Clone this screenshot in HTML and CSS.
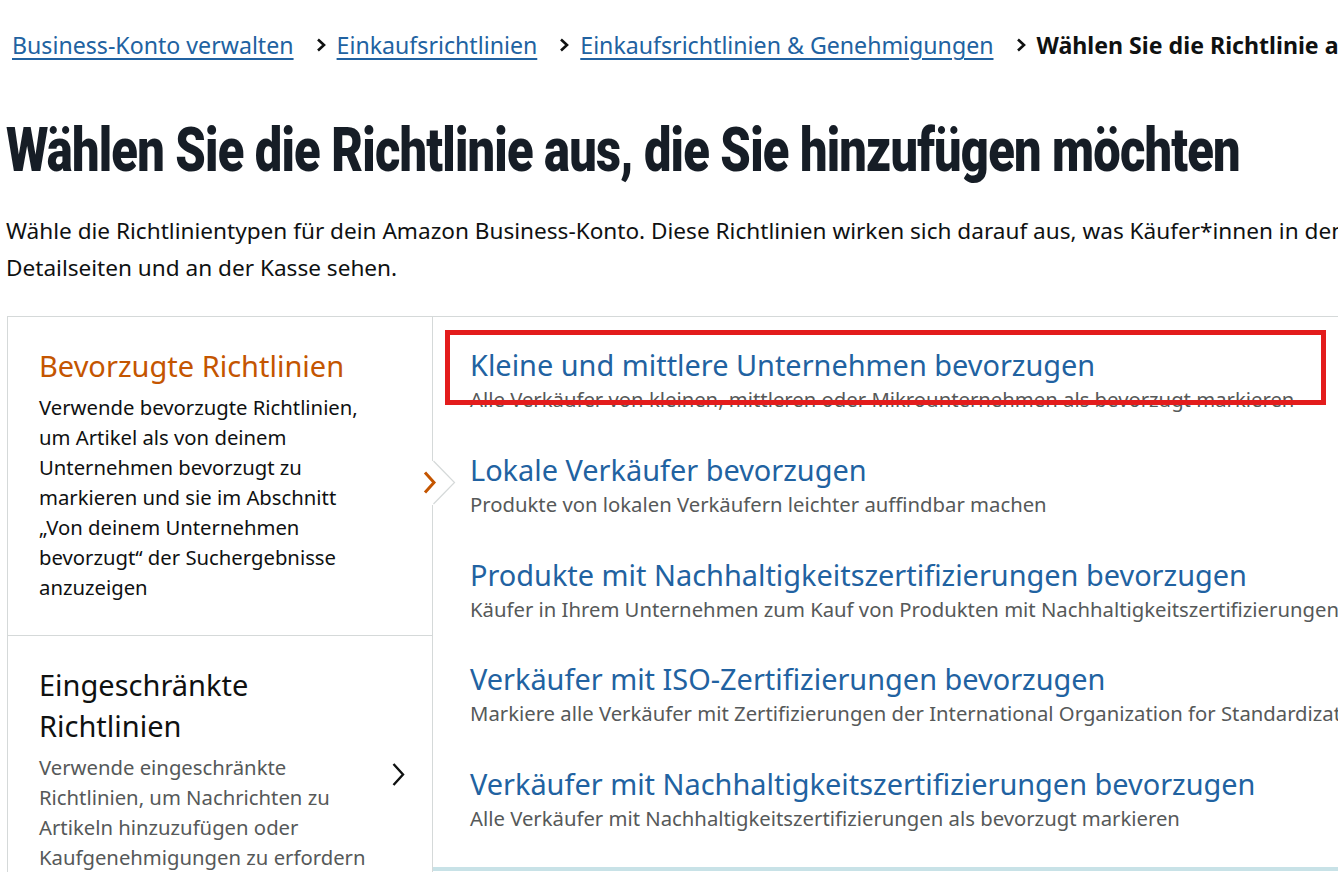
FILE: index.html
```html
<!DOCTYPE html>
<html lang="de">
<head>
<meta charset="utf-8">
<title>Richtlinie auswählen</title>
<link rel="stylesheet" href="styles.css">
</head>
<body>
<div class="page">
  <nav class="breadcrumb">
    <a class="crumb-link" href="#">Business-Konto verwalten</a>
    <svg class="crumb-sep" width="12" height="14" viewBox="0 0 12 14"><polyline points="3,1.5 9,7 3,12.5" fill="none" stroke="#0f1111" stroke-width="2.6"/></svg>
    <a class="crumb-link" href="#">Einkaufsrichtlinien</a>
    <svg class="crumb-sep" width="12" height="14" viewBox="0 0 12 14"><polyline points="3,1.5 9,7 3,12.5" fill="none" stroke="#0f1111" stroke-width="2.6"/></svg>
    <a class="crumb-link" href="#">Einkaufsrichtlinien &amp; Genehmigungen</a>
    <svg class="crumb-sep" width="12" height="14" viewBox="0 0 12 14"><polyline points="3,1.5 9,7 3,12.5" fill="none" stroke="#0f1111" stroke-width="2.6"/></svg>
    <span class="crumb-current">Wählen Sie die Richtlinie aus, die Sie hinzufügen möchten</span>
  </nav>

  <h1 class="title"><span class="title-inner">Wählen Sie die Richtlinie aus, die Sie hinzufügen möchten</span></h1>

  <p class="intro">Wähle die Richtlinientypen für dein Amazon Business-Konto. Diese Richtlinien wirken sich darauf aus, was Käufer*innen in den Suchergebnissen, auf<br>Detailseiten und an der Kasse sehen.</p>

  <div class="card">
    <div class="types">
      <div class="type type-active">
        <div class="type-text">
          <h2 class="type-title">Bevorzugte Richtlinien</h2>
          <p class="type-desc">Verwende bevorzugte Richtlinien,<br>um Artikel als von deinem<br>Unternehmen bevorzugt zu<br>markieren und sie im Abschnitt<br>„Von deinem Unternehmen<br>bevorzugt“ der Suchergebnisse<br>anzuzeigen</p>
        </div>
      </div>
      <div class="type">
        <div class="type-text">
          <h2 class="type-title">Eingeschränkte<br>Richtlinien</h2>
          <p class="type-desc">Verwende eingeschränkte<br>Richtlinien, um Nachrichten zu<br>Artikeln hinzuzufügen oder<br>Kaufgenehmigungen zu erfordern</p>
        </div>
        <svg class="type-chevron" width="16" height="26" viewBox="0 0 16 26"><polyline points="3.5,2 13,12.5 3.5,23" fill="none" stroke="#0f1111" stroke-width="2.4"/></svg>
      </div>
    </div>

    <svg class="notch" width="45" height="46" viewBox="0 0 45 46">
      <rect x="15.5" y="1" width="4" height="44" fill="#ffffff"/>
      <polyline points="17.5,1 38.5,22.5 17.5,44" fill="#ffffff" stroke="#d5d9d9" stroke-width="1.2"/>
      <polyline points="9,12.5 18,22.5 9,32.5" fill="none" stroke="#c45500" stroke-width="3"/>
    </svg>

    <div class="options">
      <div class="option">
        <a class="option-title" href="#">Kleine und mittlere Unternehmen bevorzugen</a>
        <p class="option-desc">Alle Verkäufer von kleinen, mittleren oder Mikrounternehmen als bevorzugt markieren</p>
        <div class="highlight"></div>
      </div>
      <div class="option">
        <a class="option-title" href="#">Lokale Verkäufer bevorzugen</a>
        <p class="option-desc">Produkte von lokalen Verkäufern leichter auffindbar machen</p>
      </div>
      <div class="option">
        <a class="option-title" href="#">Produkte mit Nachhaltigkeitszertifizierungen bevorzugen</a>
        <p class="option-desc">Käufer in Ihrem Unternehmen zum Kauf von Produkten mit Nachhaltigkeitszertifizierungen ermutigen</p>
      </div>
      <div class="option">
        <a class="option-title" href="#">Verkäufer mit ISO-Zertifizierungen bevorzugen</a>
        <p class="option-desc">Markiere alle Verkäufer mit Zertifizierungen der International Organization for Standardization als bevorzugt</p>
      </div>
      <div class="option">
        <a class="option-title" href="#">Verkäufer mit Nachhaltigkeitszertifizierungen bevorzugen</a>
        <p class="option-desc">Alle Verkäufer mit Nachhaltigkeitszertifizierungen als bevorzugt markieren</p>
      </div>
    </div>
  </div>
</div>
</body>
</html>
```

FILE: styles.css
```css
html, body {
  margin: 0;
  padding: 0;
  background: #ffffff;
  overflow: hidden;
}

body {
  font-family: "Noto Sans", "Open Sans", "DejaVu Sans", sans-serif;
  color: #0f1111;
}

.page {
  width: 1700px;
  padding-left: 6px;
}

.breadcrumb {
  display: flex;
  align-items: center;
  padding-top: 30px;
  padding-left: 6px;
  height: 30px;
  font-size: 23.15px;
  line-height: 30px;
  white-space: nowrap;
}

.crumb-link {
  color: #2162a1;
  text-decoration: underline;
  text-underline-offset: 4px;
  text-decoration-thickness: 1.5px;
}

.crumb-sep {
  margin: 0 10px 0 21px;
  flex: none;
}

.crumb-current {
  font-weight: 700;
  color: #0f1111;
}

.title {
  margin: 60px 0 0 0;
  height: 60px;
  font-family: "Roboto", "Liberation Sans", sans-serif;
  font-weight: 900;
  font-size: 62px;
  line-height: 60px;
  color: #161d26;
  white-space: nowrap;
}

.title-inner {
  display: inline-block;
  transform: scaleX(0.787);
  transform-origin: left center;
  letter-spacing: -1px;
}

.intro {
  margin: 32px 0 0 0;
  font-size: 22.6px;
  line-height: 37px;
  white-space: nowrap;
}

.card {
  position: relative;
  display: flex;
  align-items: flex-start;
  margin: 30px 0 0 1px;
  border-top: 1px solid #d5d9d9;
  border-left: 1px solid #d5d9d9;
}

.types {
  width: 424px;
  flex: none;
  border-right: 1px solid #d5d9d9;
}

.type {
  display: flex;
  align-items: center;
  padding: 28px 26px 33px 31px;
}

.type + .type {
  border-top: 1px solid #d5d9d9;
}

.type-text {
  flex: 1;
}

.type-title {
  margin: 0;
  font-size: 29px;
  font-weight: 400;
  line-height: 41px;
  color: #0f1111;
}

.type-active .type-title {
  color: #c45500;
}

.type-desc {
  margin: 6px 0 0 0;
  font-size: 20.3px;
  line-height: 30px;
  color: #565959;
  white-space: nowrap;
}

.type-active .type-desc {
  color: #0f1111;
}

.type-chevron {
  flex: none;
  margin-top: 14px;
}

.notch {
  position: absolute;
  left: 408px;
  top: 143px;
}

.options {
  position: relative;
  flex: 1;
  display: flex;
  flex-direction: column;
  gap: 36.75px;
  padding: 29px 0 34px 37px;
  border-bottom: 4px solid #c8e2e7;
}

.option {
  position: relative;
  display: flex;
  flex-direction: column;
}

.option-title {
  font-size: 28.9px;
  line-height: 38px;
  color: #2162a1;
  text-decoration: none;
  white-space: nowrap;
}

.option-desc {
  margin: 0;
  font-size: 20.3px;
  line-height: 30px;
  color: #565959;
  white-space: nowrap;
}

.highlight {
  position: absolute;
  left: -25px;
  top: -16px;
  width: 881px;
  height: 75px;
  box-sizing: border-box;
  border: 5px solid #e31c1c;
}
```
